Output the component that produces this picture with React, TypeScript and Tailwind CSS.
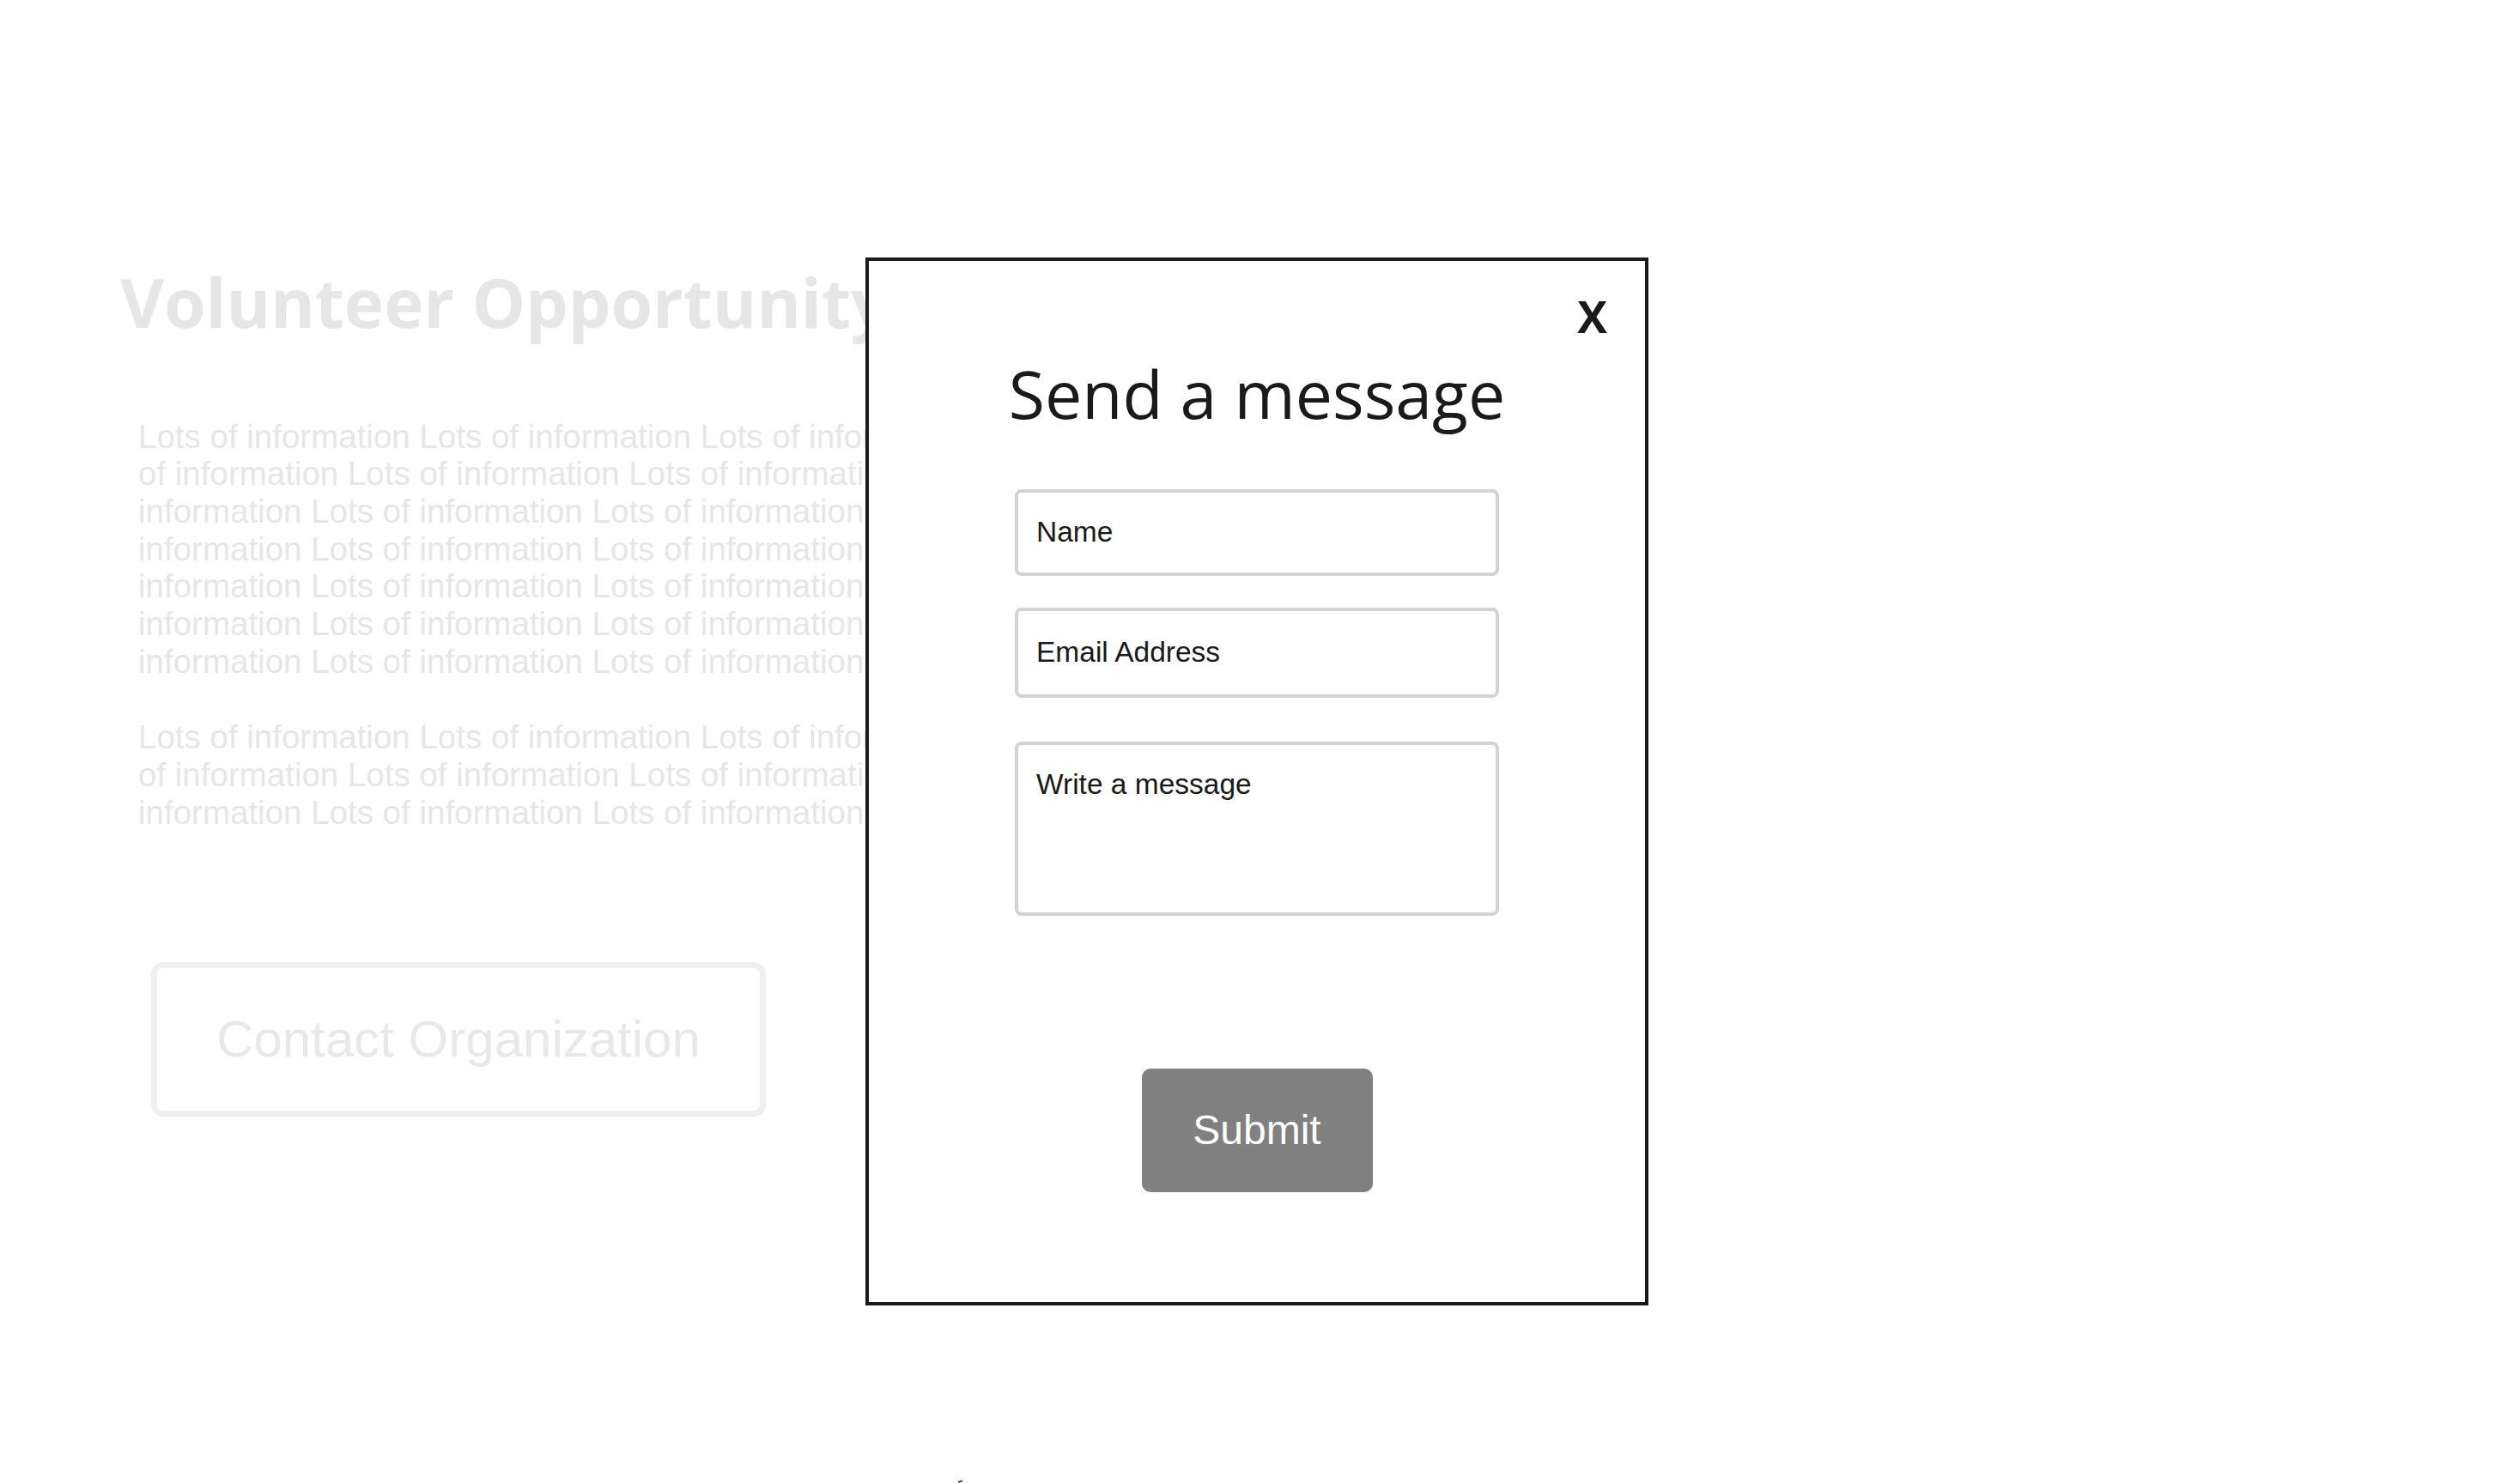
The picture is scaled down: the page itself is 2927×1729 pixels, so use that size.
import React from "react";

const cycle = "Lots of information ";

export default function App() {
  const p1 = (cycle.repeat(21) + "Lots of").trim();
  const p2 = (cycle.repeat(9) + "Lots of").trim();
  return (
    <div className="relative min-h-[1729px] w-full overflow-hidden bg-white">
      <div className="flex w-[1008px] flex-col items-start overflow-hidden pl-[140px] pt-[313px]">
        <h1 className="whitespace-nowrap font-['Open_Sans',sans-serif] text-[78.5px] font-bold leading-[78.5px] text-[#e6e6e6]">
          Volunteer Opportunity
        </h1>
        <p className="ml-[21px] mt-[95px] w-[1075px] shrink-0 font-['Liberation_Sans',Arial,sans-serif] text-[38.5px] leading-[43.7px] text-[#e6e6e6]">
          {p1}
        </p>
        <p className="ml-[21px] mt-[45px] w-[1075px] shrink-0 font-['Liberation_Sans',Arial,sans-serif] text-[38.5px] leading-[43.7px] text-[#e6e6e6]">
          {p2}
        </p>
        <div className="ml-[36px] mt-[152px] flex h-[180px] w-[716px] items-center justify-center rounded-[14px] border-[7px] border-[#efefef]">
          <span className="font-['Liberation_Sans',Arial,sans-serif] text-[60px] leading-none text-[#e8e8e8]">
            Contact Organization
          </span>
        </div>
      </div>

      <div className="absolute left-[1008px] top-[300px] flex h-[1221px] w-[912px] flex-col items-center border-4 border-[#1a1a1a] bg-white">
        <div className="flex self-stretch justify-end pr-[44px] pt-[38px]">
          <span className="font-['Open_Sans',sans-serif] text-[52px] font-bold leading-[52px] text-[#1a1a1a]">
            X
          </span>
        </div>
        <h2 className="mt-[26px] whitespace-nowrap font-['Open_Sans',sans-serif] text-[77px] font-normal leading-[77px] text-[#1a1a1a]">
          Send a message
        </h2>
        <div className="mt-[73px] flex h-[101px] w-[564px] items-center rounded-[8px] border-4 border-[#d3d3d3] pl-[21px] font-['Liberation_Sans',Arial,sans-serif] text-[33.5px] text-[#1a1a1a]">
          Name
        </div>
        <div className="mt-[37px] flex h-[105px] w-[564px] items-center rounded-[8px] border-4 border-[#d3d3d3] pl-[21px] font-['Liberation_Sans',Arial,sans-serif] text-[33.5px] text-[#1a1a1a]">
          Email Address
        </div>
        <div className="mt-[51px] h-[203px] w-[564px] rounded-[8px] border-4 border-[#d3d3d3] pl-[21px] pt-[21px] font-['Liberation_Sans',Arial,sans-serif] text-[33.5px] text-[#1a1a1a]">
          Write a message
        </div>
        <button className="mt-[178px] flex h-[144px] w-[269px] items-center justify-center rounded-[10px] bg-[#808080] font-['Liberation_Sans',Arial,sans-serif] text-[48px] leading-none text-white">
          Submit
        </button>
      </div>

      <div className="absolute left-[1116px] top-[1725px] h-[2px] w-[5px] -rotate-[20deg] bg-[#333333]" />
    </div>
  );
}
